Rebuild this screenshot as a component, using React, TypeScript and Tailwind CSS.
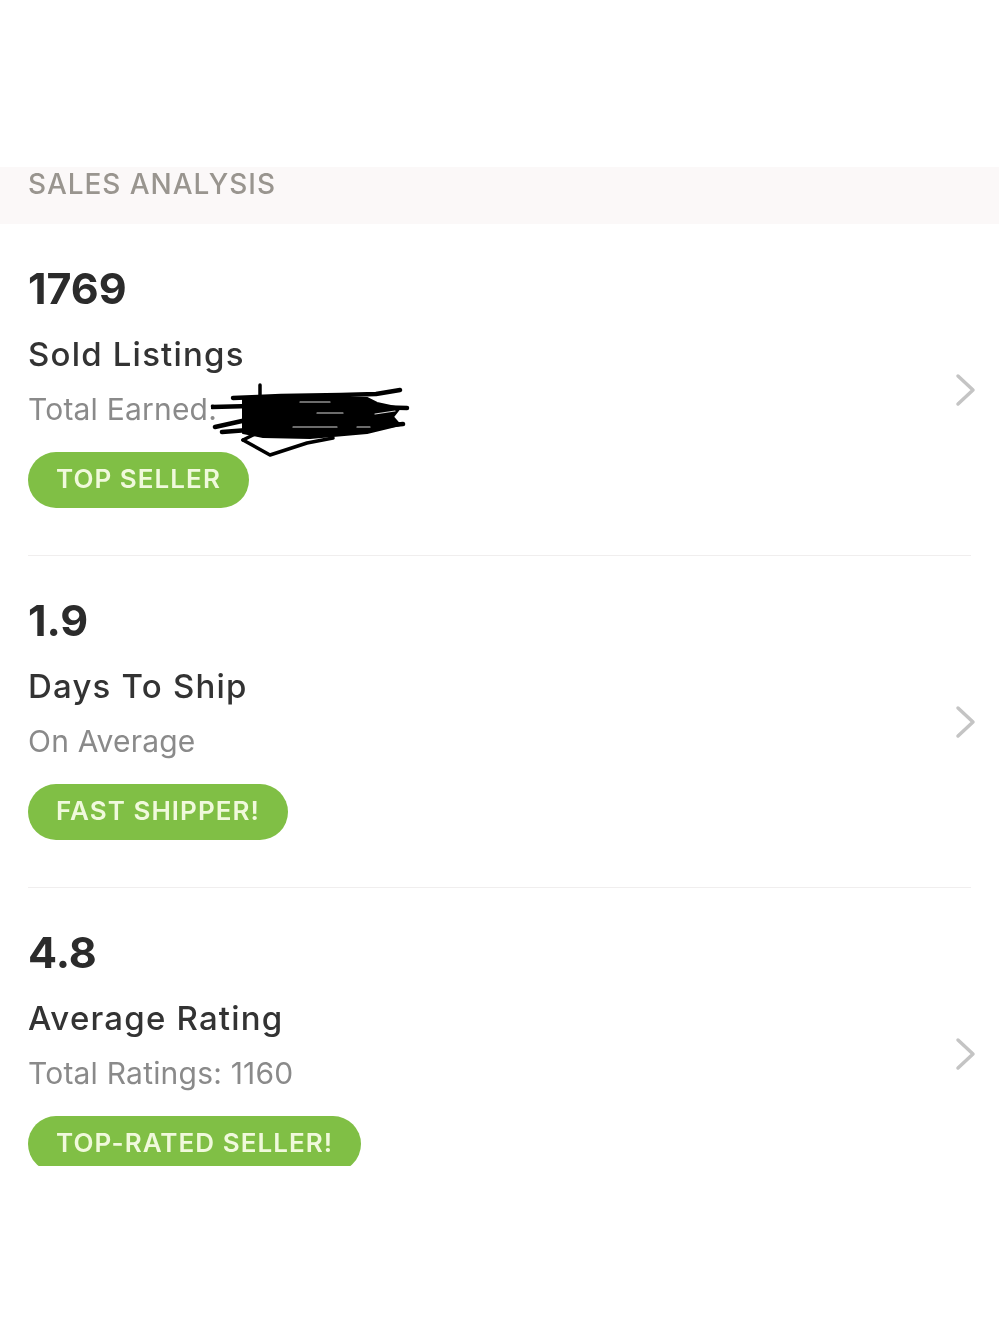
const font = "font-['Inter','Liberation_Sans',sans-serif]"

const stats = [
  { value: '1769', title: 'Sold Listings', sub: 'Total Earned:', badge: 'TOP SELLER', scribble: true },
  { value: '1.9', title: 'Days To Ship', sub: 'On Average', badge: 'FAST SHIPPER!', scribble: false },
  { value: '4.8', title: 'Average Rating', sub: 'Total Ratings: 1160', badge: 'TOP-RATED SELLER!', scribble: false },
]

function Scribble() {
  return (
    <svg
      className="absolute left-[183px] top-[-10px]"
      width="200"
      height="80"
      viewBox="0 0 200 80"
      fill="none"
      stroke="#000"
      strokeLinecap="round"
      strokeLinejoin="round"
    >
      <path d="M32 17L69 17L156 17L166 22L189 27L182 36L189 44L156 52L99 57L52 56L32 52Z" fill="#000" strokeWidth="2" />
      <path d="M49 4V28" strokeWidth="3.5" />
      <path d="M22 17L70 15L130 14L165 13L189 9" strokeWidth="4.5" />
      <path d="M1 26L40 25M160 26L196 27" strokeWidth="4.5" />
      <path d="M4 46L40 38M150 47L192 43" strokeWidth="4.5" />
      <path d="M11 51L50 48" strokeWidth="4.5" />
      <path d="M32 59L59 74L96 62L122 57" strokeWidth="3.5" />
      <path d="M32 59L46 52" strokeWidth="3.5" />
      <path d="M89 21H119M106 32H132M82 46H126M146 46H159M164 33L184 30" stroke="#d8d8d8" strokeWidth="1.2" />
    </svg>
  )
}

function Chevron() {
  return (
    <svg width="22" height="34" viewBox="0 0 22 34" fill="none" stroke="#c4c4c4" strokeWidth="3.5" strokeLinecap="round" strokeLinejoin="round">
      <path d="M3 3L18 17L3 31" />
    </svg>
  )
}

function StatRow({ stat }: { stat: (typeof stats)[number] }) {
  return (
    <div className="ml-7 mr-7 flex items-center justify-between border-b border-[#f0eeee] pt-10 pb-[47px]">
      <div>
        <p className="text-[43px] leading-[48px] font-bold text-[#2b2b2b]">{stat.value}</p>
        <p className="mt-6 text-[33px] leading-9 font-medium tracking-[1.2px] text-[#333333]">{stat.title}</p>
        <div className="relative mt-[19px] text-[30px] leading-9 tracking-[0.2px] text-[#8a8a8a]">
          {stat.sub}
          {stat.scribble && <Scribble />}
        </div>
        <div className="mt-[25px]">
          <span className="inline-block h-14 rounded-full bg-[#80bf45] px-7 text-[26px] leading-[53px] font-semibold tracking-[1.05px] text-[#f0f9dc]">
            {stat.badge}
          </span>
        </div>
      </div>
      <div className="-mr-[6px] mt-2">
        <Chevron />
      </div>
    </div>
  )
}

export default function App() {
  return (
    <div className={`h-[1333px] bg-white pt-[167px] blur-[0.6px] ${font}`}>
      <div className="h-[999px] overflow-hidden">
        <div className="h-[57px] bg-[#fbf8f8] pl-7 text-[28px] leading-[34px] font-medium tracking-[0.95px] text-[#99958f]">
          SALES ANALYSIS
        </div>
        {stats.map(stat => (
          <StatRow key={stat.value} stat={stat} />
        ))}
      </div>
    </div>
  )
}
